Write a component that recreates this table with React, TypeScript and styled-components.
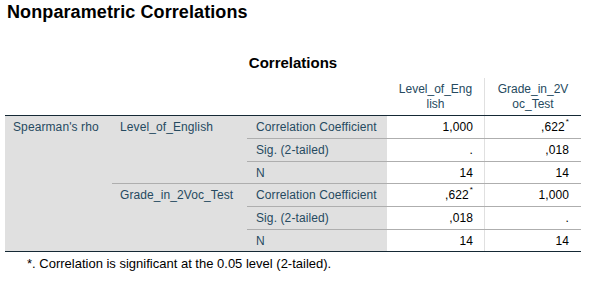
import React from "react";
import styled, { createGlobalStyle } from "styled-components";

const GlobalStyle = createGlobalStyle`
  html, body {
    margin: 0;
    padding: 0;
    background: #ffffff;
  }
  body {
    font-family: "Liberation Sans", Arial, sans-serif;
  }
`;

const LABEL = "#264a60";
const SHADE = "#e0e0e0";
const RULE = "#aeaeae";
const DARK = "#152935";

const Page = styled.div`
  width: 592px;
  height: 283px;
  overflow: hidden;
  padding-top: 2px;
  box-sizing: border-box;
`;

const Title = styled.h1`
  margin: 0 0 0 7px;
  font-size: 18px;
  line-height: 21px;
  font-weight: bold;
  letter-spacing: 0.1px;
  color: #000;
`;

const Output = styled.div`
  width: 576px;
  margin: 31px 0 0 5px;
`;

const Caption = styled.div`
  text-align: center;
  font-size: 15px;
  line-height: 18px;
  font-weight: bold;
  color: #000;
  margin-bottom: 6px;
`;

const HeaderRow = styled.div`
  display: flex;
  height: 37px;
`;

const HeadSpacer = styled.div`
  width: 382px;
`;

const HeadCell = styled.div<{ $divider?: boolean }>`
  width: 97px;
  box-sizing: border-box;
  padding: 0 11px;
  display: flex;
  flex-direction: column;
  justify-content: center;
  text-align: center;
  font-size: 12px;
  line-height: 15px;
  color: ${LABEL};
  word-break: break-all;
  border-left: ${(p) => (p.$divider ? `1px solid ${SHADE}` : "none")};
`;

const Body = styled.div`
  display: flex;
  border-top: 1px solid ${DARK};
  border-bottom: 1px solid ${DARK};
  font-size: 12px;
  letter-spacing: 0.1px;
`;

const Stub = styled.div`
  width: 107px;
  box-sizing: border-box;
  padding-left: 8px;
  background: ${SHADE};
  color: ${LABEL};
  line-height: 23px;
`;

const Groups = styled.div`
  flex: 1;
  display: flex;
  flex-direction: column;
`;

const Group = styled.div<{ $separated?: boolean }>`
  display: flex;
  border-bottom: ${(p) => (p.$separated ? `1px solid ${RULE}` : "none")};
`;

const GroupLabel = styled.div`
  width: 135px;
  box-sizing: border-box;
  padding-left: 8px;
  background: ${SHADE};
  color: ${LABEL};
  line-height: 23px;
`;

const Rows = styled.div`
  flex: 1;
  display: flex;
  flex-direction: column;
`;

const Row = styled.div<{ $last?: boolean }>`
  display: flex;
  box-sizing: border-box;
  height: ${(p) => (p.$last ? "21px" : "23px")};
  border-bottom: ${(p) => (p.$last ? "none" : `1px solid ${RULE}`)};
`;

const RowLabel = styled.div`
  width: 140px;
  box-sizing: border-box;
  padding-left: 9px;
  background: ${SHADE};
  color: ${LABEL};
  display: flex;
  align-items: center;
`;

const Value = styled.div<{ $divider?: boolean }>`
  width: 97px;
  box-sizing: border-box;
  padding-right: ${(p) => (p.$divider ? "12px" : "11px")};
  display: flex;
  align-items: center;
  justify-content: flex-end;
  color: #000;
  border-left: ${(p) => (p.$divider ? `1px solid ${SHADE}` : "none")};
`;

const Star = styled.span`
  font-size: 8px;
  line-height: 0;
  position: relative;
  top: -5px;
  margin-left: 1px;
`;

const Footnote = styled.div`
  margin-top: 4px;
  padding-left: 22px;
  font-size: 13px;
  line-height: 16px;
  color: #000;
`;

type Cell = { v: string; star?: boolean };
type Stat = { label: string; cells: [Cell, Cell] };
type Variable = { name: string; stats: Stat[] };

const data: Variable[] = [
  {
    name: "Level_of_English",
    stats: [
      { label: "Correlation Coefficient", cells: [{ v: "1,000" }, { v: ",622", star: true }] },
      { label: "Sig. (2-tailed)", cells: [{ v: "." }, { v: ",018" }] },
      { label: "N", cells: [{ v: "14" }, { v: "14" }] },
    ],
  },
  {
    name: "Grade_in_2Voc_Test",
    stats: [
      { label: "Correlation Coefficient", cells: [{ v: ",622", star: true }, { v: "1,000" }] },
      { label: "Sig. (2-tailed)", cells: [{ v: ",018" }, { v: "." }] },
      { label: "N", cells: [{ v: "14" }, { v: "14" }] },
    ],
  },
];

export default function App() {
  return (
    <Page>
      <GlobalStyle />
      <Title>Nonparametric Correlations</Title>
      <Output>
        <Caption>Correlations</Caption>
        <HeaderRow>
          <HeadSpacer />
          <HeadCell>Level_of_English</HeadCell>
          <HeadCell $divider>Grade_in_2Voc_Test</HeadCell>
        </HeaderRow>
        <Body>
          <Stub>Spearman's rho</Stub>
          <Groups>
            {data.map((variable, gi) => (
              <Group key={variable.name} $separated={gi < data.length - 1}>
                <GroupLabel>{variable.name}</GroupLabel>
                <Rows>
                  {variable.stats.map((stat, si) => (
                    <Row key={stat.label} $last={si === variable.stats.length - 1}>
                      <RowLabel>{stat.label}</RowLabel>
                      {stat.cells.map((cell, ci) => (
                        <Value key={ci} $divider={ci === 1}>
                          {cell.v}
                          {cell.star && <Star>*</Star>}
                        </Value>
                      ))}
                    </Row>
                  ))}
                </Rows>
              </Group>
            ))}
          </Groups>
        </Body>
        <Footnote>*. Correlation is significant at the 0.05 level (2-tailed).</Footnote>
      </Output>
    </Page>
  );
}
